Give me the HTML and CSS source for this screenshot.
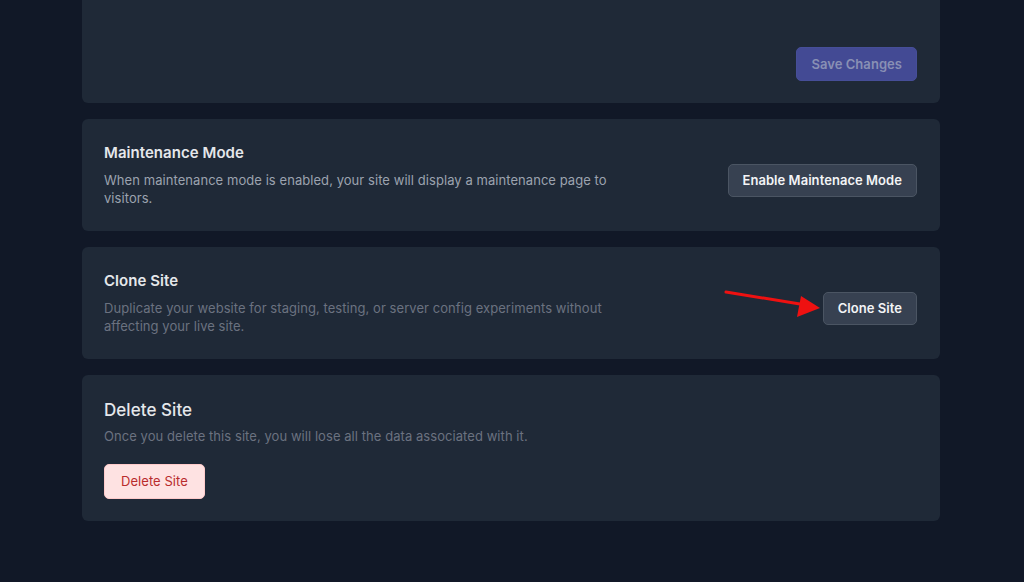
FILE: index.html
```html
<!DOCTYPE html>
<html lang="en">
<head>
<meta charset="utf-8">
<title>Site Settings</title>
<link rel="stylesheet" href="styles.css">
</head>
<body>
<main class="page">
  <section class="card card-top">
    <div class="actions-end">
      <button class="btn btn-primary" type="button">Save Changes</button>
    </div>
  </section>

  <section class="card card-row">
    <div class="card-text">
      <h3 class="card-title">Maintenance Mode</h3>
      <p class="card-desc">When maintenance mode is enabled, your site will display a maintenance page to visitors.</p>
    </div>
    <button class="btn btn-secondary" type="button">Enable Maintenace Mode</button>
  </section>

  <section class="card card-row">
    <div class="card-text">
      <h3 class="card-title">Clone Site</h3>
      <p class="card-desc muted">Duplicate your website for staging, testing, or server config experiments without affecting your live site.</p>
    </div>
    <button class="btn btn-secondary" type="button">Clone Site</button>
  </section>

  <section class="card card-danger">
    <h3 class="card-title title-lg">Delete Site</h3>
    <p class="card-desc muted">Once you delete this site, you will lose all the data associated with it.</p>
    <button class="btn btn-danger" type="button">Delete Site</button>
  </section>
</main>

<svg class="annotation" width="1024" height="582" viewBox="0 0 1024 582" aria-hidden="true">
  <line x1="726" y1="292" x2="806" y2="305" stroke="#ee1111" stroke-width="3" stroke-linecap="round"/>
  <polygon points="801,296 797,317 820,308" fill="#ee1111"/>
</svg>
</body>
</html>
```

FILE: styles.css
```css
* {
  box-sizing: border-box;
}

html, body {
  margin: 0;
  padding: 0;
}

body {
  background: #111827;
  font-family: Inter, "Noto Sans", "Liberation Sans", sans-serif;
  color: #e5e7eb;
  width: 1024px;
  height: 582px;
  overflow: hidden;
  position: relative;
}

.page {
  width: 858px;
  margin-left: 82px;
  display: flex;
  flex-direction: column;
  gap: 16px;
}

.card {
  background: #1f2937;
  border-radius: 6px;
  padding: 24px 23px 24px 22px;
}

.card-top {
  border-top-left-radius: 0;
  border-top-right-radius: 0;
  padding-top: 47px;
  padding-bottom: 22px;
}

.actions-end {
  display: flex;
  justify-content: flex-end;
}

.card-row {
  display: flex;
  align-items: center;
  justify-content: space-between;
  gap: 24px;
  padding-bottom: 24px;
}

.card-row .btn {
  margin-top: 10px;
}

.card-text {
  max-width: 512px;
}

.card-title {
  margin: 0;
  font-size: 15px;
  line-height: 20px;
  font-weight: 600;
  color: #e5e7eb;
  letter-spacing: 0.05px;
}

.title-lg {
  font-size: 17px;
  line-height: 22px;
  font-weight: 500;
}

.card-desc {
  margin: 8px 0 0;
  font-size: 13px;
  line-height: 18px;
  color: #9ca3af;
  letter-spacing: 0.06px;
}

.card-desc.muted {
  color: #6b7280;
}

.card-danger {
  padding-bottom: 22px;
}

.card-danger .card-desc {
  margin-top: 6px;
}

.btn {
  font-family: inherit;
  font-size: 13px;
  line-height: 17px;
  border-radius: 5px;
  cursor: pointer;
  white-space: nowrap;
  letter-spacing: 0.05px;
}

.btn-primary {
  height: 34px;
  padding: 0 14px;
  background: #434a94;
  border: 1px solid #464e98;
  color: #8990b4;
  font-weight: 600;
}

.btn-secondary {
  height: 33px;
  padding: 0 14px;
  background: #374151;
  border: 1px solid #4b5563;
  color: #f3f4f6;
  font-weight: 600;
}

.btn-danger {
  margin-top: 19px;
  height: 35px;
  padding: 0 16px;
  background: #fee2e2;
  border: 1px solid #fecaca;
  color: #b92c2c;
  font-weight: 400;
}

.annotation {
  position: absolute;
  left: 0;
  top: 0;
  pointer-events: none;
}
```
